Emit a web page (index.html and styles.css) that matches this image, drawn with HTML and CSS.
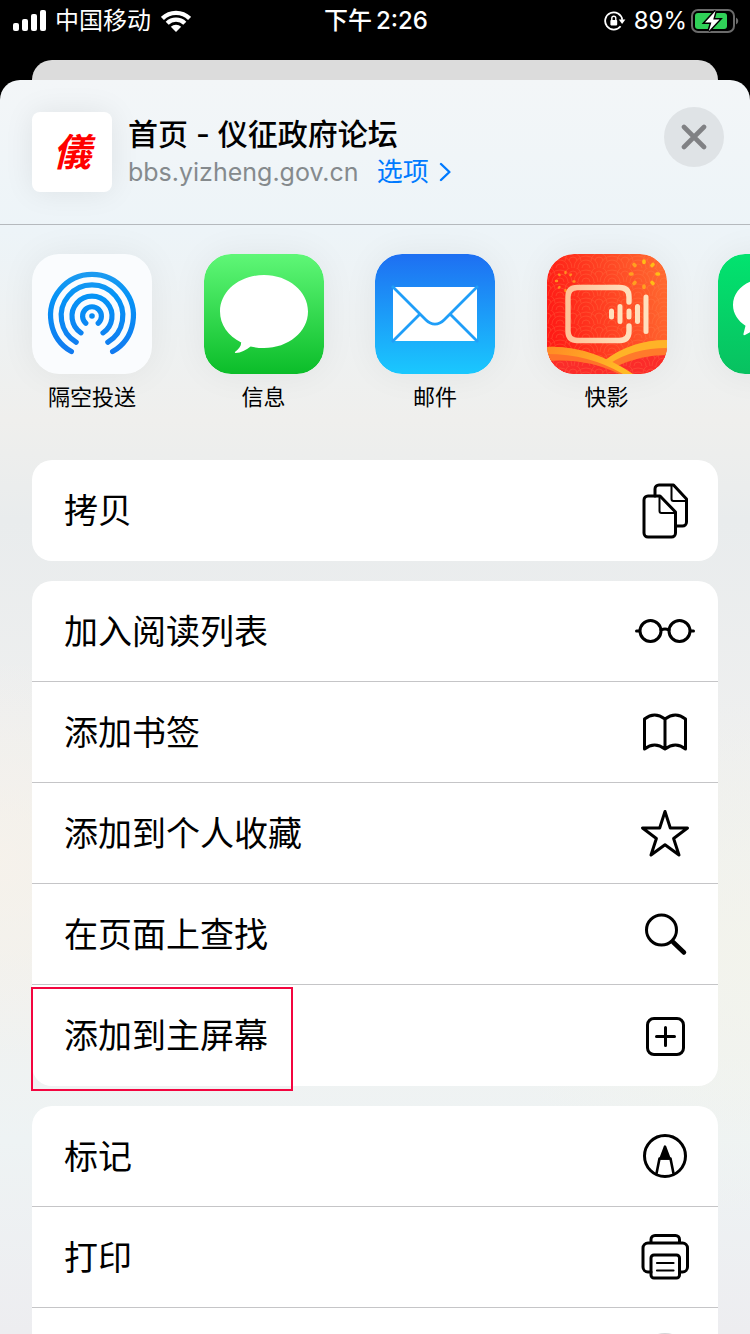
FILE: index.html
```html
<!DOCTYPE html>
<html lang="zh-CN">
<head>
  <meta charset="UTF-8" />
  <meta name="viewport" content="width=device-width, initial-scale=1" />
  <title>首页 - 仪征政府论坛</title>
  <link rel="stylesheet" href="styles.css">
</head>
<body>
  <div class="status-bar">
    <div class="status-left">
      <svg width="34" height="22" viewBox="0 0 34 22" fill="#fff">
        <rect x="0" y="13" width="6" height="8" rx="2"/>
        <rect x="9" y="9" width="6" height="12" rx="2"/>
        <rect x="18" y="4" width="6" height="17" rx="2"/>
        <rect x="27" y="0" width="6" height="21" rx="2"/>
      </svg>
      <span>中国移动</span>
      <svg class="wifi" width="30" height="22" viewBox="0 0 30 22" fill="none" stroke="#fff" stroke-width="4.4">
        <path d="M1.4 8.4a19.4 19.4 0 0 1 27.2 0"/>
        <path d="M6.2 13.2a12.6 12.6 0 0 1 17.6 0"/>
        <path d="M15 22l-5.2-5.2a7.4 7.4 0 0 1 10.4 0z" fill="#fff" stroke="none"/>
      </svg>
    </div>
    <div class="status-time"><span>下午</span><span>2:26</span></div>
    <div class="status-right">
      <svg width="22" height="20" viewBox="0 0 22 20" fill="none" stroke="#fff" stroke-width="1.8">
        <path d="M16.6 15.2a8.6 8.6 0 1 1 1.7-6.4"/>
        <path d="M14.8 8.4h6.6l-3.3 4.6z" fill="#fff" stroke="none"/>
        <rect x="6.4" y="9" width="6.8" height="5.4" rx="0.8" fill="#fff" stroke="none"/>
        <path d="M7.8 9.4V7.2a2 2 0 0 1 4 0v2.2" stroke-width="1.4"/>
      </svg>
      <span>89%</span>
      <svg class="battery" width="48" height="24" viewBox="0 0 48 24">
        <rect x="1" y="1" width="42" height="22" rx="6" fill="none" stroke="#6b6b6b" stroke-width="2"/>
        <path d="M45 8.4a4 4 0 0 1 0 7.2z" fill="#6b6b6b"/>
        <rect x="4" y="4" width="32" height="16" rx="3" fill="#30d158"/>
        <path d="M24.5 2L14 13.400h6.400L17.800 22 28.500 10.400h-6.300z" fill="#fff" stroke="#000" stroke-width="3" paint-order="stroke"/>
      </svg>
    </div>
  </div>

  <div class="back-card"></div>

  <main class="sheet">
    <header class="sheet-header">
      <div class="site-logo">儀</div>
      <div class="site-info">
        <h1>首页 - 仪征政府论坛</h1>
        <div class="site-sub">
          <span class="site-url">bbs.yizheng.gov.cn</span>
          <a href="#">选项
            <svg width="12" height="20" viewBox="0 0 12 20" fill="none" stroke="#007aff" stroke-width="2.4" stroke-linecap="round" stroke-linejoin="round"><path d="M2 2l8.4 8L2 18"/></svg>
          </a>
        </div>
      </div>
      <button class="close" type="button" aria-label="关闭">
        <svg width="26" height="26" viewBox="0 0 26 26" stroke="#808184" stroke-width="4.6" stroke-linecap="round"><path d="M3 3l20 20M23 3L3 23"/></svg>
      </button>
    </header>

    <nav class="apps">
      <button class="app" type="button">
        <svg class="app-icon" viewBox="0 0 120 120">
          <defs>
            <linearGradient id="air" gradientUnits="userSpaceOnUse" x1="0" y1="18" x2="0" y2="100">
              <stop offset="0" stop-color="#1e9bf0"/><stop offset="0.3" stop-color="#0593f6"/><stop offset="1" stop-color="#127af0"/>
            </linearGradient>
          </defs>
          <rect width="120" height="120" rx="27" fill="#fafcfe"/>
          <g fill="none" stroke="url(#air)" stroke-width="5.2" stroke-linecap="round">
            <path d="M39.4 97.6a41.4 41.4 0 1 1 41.2 0"/>
            <path d="M44.2 88.2a30.8 30.8 0 1 1 31.6 0"/>
            <path d="M49 78.8a20 20 0 1 1 22 0"/>
            <path d="M53.8 69.2a9.4 9.4 0 1 1 12.4 0"/>
          </g>
          <circle cx="60" cy="62" r="2.8" fill="#078bf3"/>
        </svg>
        <span>隔空投送</span>
      </button>
      <button class="app" type="button">
        <svg class="app-icon" viewBox="0 0 120 120">
          <defs>
            <linearGradient id="msg" x1="0" y1="0" x2="0" y2="1">
              <stop offset="0" stop-color="#5ff777"/><stop offset="1" stop-color="#0bbd29"/>
            </linearGradient>
          </defs>
          <rect width="120" height="120" rx="27" fill="url(#msg)"/>
          <path d="M60 21c24.4 0 44 16.2 44 36.5S84.4 94 60 94c-4.800 0-9.200-.5-13.400-1.600-4.600 3.600-9.600 6.200-15 6.600-.8 0-1-.8-.4-1.300 3.400-2.600 6-5.600 6-9.300C24 82 16 70.600 16 57.500 16 37.200 35.600 21 60 21z" fill="#fff"/>
        </svg>
        <span>信息</span>
      </button>
      <button class="app" type="button">
        <svg class="app-icon" viewBox="0 0 120 120">
          <defs>
            <linearGradient id="mail" x1="0" y1="0" x2="0" y2="1">
              <stop offset="0" stop-color="#1e6ff2"/><stop offset="1" stop-color="#1ac8fe"/>
            </linearGradient>
          </defs>
          <rect width="120" height="120" rx="27" fill="url(#mail)"/>
          <rect x="18" y="33" width="84" height="54" rx="2" fill="#fff"/>
          <g fill="none" stroke="#1f9ef8" stroke-width="2.8">
            <path d="M17 32l34 34c5.400 5.400 12.600 5.400 18 0l34-34"/>
            <path d="M17 88l27.500-27.500M103 88L75.500 60.500"/>
          </g>
        </svg>
        <span>邮件</span>
      </button>
      <button class="app" type="button">
        <svg class="app-icon" viewBox="0 0 120 120">
          <defs>
            <linearGradient id="kyBg" x1="0" y1="0.4" x2="1" y2="0.2">
              <stop offset="0" stop-color="#ff1c16"/><stop offset="1" stop-color="#ff6a30"/>
            </linearGradient>
            <linearGradient id="kyFrame" gradientUnits="userSpaceOnUse" x1="18" y1="0" x2="102" y2="0">
              <stop offset="0" stop-color="#ffc096"/><stop offset="1" stop-color="#ffe8c8"/>
            </linearGradient>
            <linearGradient id="kyWave" x1="0" y1="0" x2="1" y2="0.3">
              <stop offset="0" stop-color="#ff8a24"/><stop offset="1" stop-color="#ffba26"/>
            </linearGradient>
            <pattern id="scales" width="26" height="14" patternUnits="userSpaceOnUse">
              <g fill="none" stroke="#ff8a55" stroke-width="1" opacity="0.25">
                <path d="M1 14a12 12 0 0 1 24 0M5 14a8 8 0 0 1 16 0M9 14a4 4 0 0 1 8 0"/>
                <path d="M-8 7a8 8 0 0 1 16 0M-4 7a4 4 0 0 1 8 0M18 7a8 8 0 0 1 16 0M22 7a4 4 0 0 1 8 0"/>
              </g>
            </pattern>
            <clipPath id="kyClip"><rect width="120" height="120" rx="27"/></clipPath>
          </defs>
          <g clip-path="url(#kyClip)">
            <rect width="120" height="120" fill="url(#kyBg)"/>
            <path d="M0 105q30-4 60 10l60-20v25H0z" fill="#fb2c2a"/>
            <rect width="120" height="120" fill="url(#scales)"/>
            <path d="M57 107Q84 86 120 86v15Q92 101 68 113z" fill="#ff7a2b"/>
            <path d="M57 107Q84 86 120 86v8Q86 94 62 110z" fill="#ffb327"/>
            <path d="M0 93Q38 91 86 120H72Q40 104 0 107z" fill="#ff7229"/>
            <path d="M0 93Q42 91 86 120H76Q42 100 0 100z" fill="url(#kyWave)"/>
          </g>
          <g fill="none" stroke-linecap="round">
            <g stroke="#ffbd16" stroke-width="3.6">
              <path d="M97 7v1.500M106 10.500l-1 1M110 20h1.500M105 28.500l1 1" />
              <path d="M97 32v1.500M88 28.500l-1 1M83.500 20H85M87 10.500l1 1" stroke="#ff9f20"/>
            </g>
            <path d="M18.500 18v1M24 20.500l-.6.600M26.500 27.500h1M24 33.500l.6.600M18.500 36v1M12.500 33l-.6.600M9 27h1M12 20.500l.6.600" stroke="#ff8e20" stroke-width="2.4"/>
            <path d="M82 48V43q0-9.500-9.500-9.500h-42q-9.500 0-9.500 9.500v34q0 9.500 9.500 9.500h42q9.500 0 9.500-9.500v-5" stroke="url(#kyFrame)" stroke-width="5.4"/>
            <path d="M64.500 57v6M73 52.500v15M82 57v6M90.500 52.500v15M99 43V77.500" stroke="#ffe0bd" stroke-width="5"/>
          </g>
        </svg>
        <span>快影</span>
      </button>
      <button class="app" type="button" aria-label="更多应用">
        <svg class="app-icon" viewBox="0 0 120 120">
          <defs>
            <linearGradient id="wx" x1="0" y1="0" x2="0" y2="1">
              <stop offset="0" stop-color="#02e36f"/><stop offset="1" stop-color="#08c160"/>
            </linearGradient>
          </defs>
          <rect width="120" height="120" rx="27" fill="url(#wx)"/>
          <path d="M46 25c17 0 31 11.500 31 26S63 77 46 77c-3.400 0-6.600-.4-9.600-1.200L27 81c-1 .5-1.800-.2-1.500-1.300l2-8C20 67 15 59.500 15 51c0-14.500 14-26 31-26z" fill="#fff"/>
        </svg>
      </button>
    </nav>

    <section class="actions">
      <ul class="group">
        <li>
          <button class="action" type="button">
            <span>拷贝</span>
            <svg class="icon" viewBox="0 0 60 60">
              <path d="M20 15V8a4 4 0 0 1 4-4h14.500L51.500 18v23a4 4 0 0 1-4 4H42"/>
              <path d="M36.500 5v13a2 2 0 0 0 2 2h12" stroke-width="2"/>
              <path d="M13 15h12l15.500 16v21a4 4 0 0 1-4 4H13a4 4 0 0 1-4-4V19a4 4 0 0 1 4-4z"/>
              <path d="M24.500 16v14a2 2 0 0 0 2 2h13" stroke-width="2"/>
            </svg>
          </button>
        </li>
      </ul>

      <ul class="group">
        <li>
          <button class="action" type="button">
            <span>加入阅读列表</span>
            <svg class="icon" viewBox="0 0 60 60">
              <circle cx="15.500" cy="30" r="10.500"/><circle cx="44.500" cy="30" r="10.500"/>
              <path d="M1.500 30h3M55.500 30h3M26 29q4-2 8 0"/>
            </svg>
          </button>
        </li>
        <li>
          <button class="action" type="button">
            <span>添加书签</span>
            <svg class="icon" viewBox="0 0 60 60">
              <path d="M9.500 47V17q10-8 20.500 0 10.500-8 20.500 0v30q-10-8-20.500 0-10.500-8-20.500 0zM30 17v30"/>
            </svg>
          </button>
        </li>
        <li>
          <button class="action" type="button">
            <span>添加到个人收藏</span>
            <svg class="icon" viewBox="0 0 60 60">
              <path d="M30 8.500l5.300 16.500H52.500L38.600 35.500 44 52 30 41.800 16 52 21.400 35.500 7.500 25h17.200z"/>
            </svg>
          </button>
        </li>
        <li>
          <button class="action" type="button">
            <span>在页面上查找</span>
            <svg class="icon" viewBox="0 0 60 60">
              <circle cx="26.500" cy="26" r="15"/>
              <path d="M38 38l11 10.500" stroke-width="4.5"/>
            </svg>
          </button>
        </li>
        <li class="marked">
          <button class="action" type="button">
            <span>添加到主屏幕</span>
            <svg class="icon" viewBox="0 0 60 60">
              <rect x="12.500" y="12.500" width="36" height="36" rx="6.500"/>
              <path d="M30.500 21.500v18M21.500 30.500h18"/>
            </svg>
          </button>
        </li>
      </ul>

      <ul class="group">
        <li>
          <button class="action" type="button">
            <span>标记</span>
            <svg class="icon" viewBox="0 0 60 60">
              <circle cx="30" cy="30" r="20.500"/>
              <path d="M21.500 47.500l3-15h11l3 15" stroke-width="2.6"/>
              <path d="M30 20.500l4.500 12h-9z" fill="#000" stroke-width="2.4"/>
            </svg>
          </button>
        </li>
        <li>
          <button class="action" type="button">
            <span>打印</span>
            <svg class="icon" viewBox="0 0 60 60">
              <path d="M16 15v-2.500a4 4 0 0 1 4-4h20.500a4 4 0 0 1 4 4V15"/>
              <path d="M16 45h-3a5 5 0 0 1-5-5V21a5 5 0 0 1 5-5h34.500a5 5 0 0 1 5 5v19a5 5 0 0 1-5 5h-3"/>
              <rect x="16" y="28" width="28.500" height="23" rx="3"/>
              <path d="M22 36h16.500M22 43.500h16.500" stroke-width="2.2"/>
            </svg>
          </button>
        </li>
        <li>
          <button class="action" type="button" aria-label="更多操作">
            <svg class="icon" viewBox="0 0 60 60"><circle cx="30" cy="30" r="26" fill="#d5d5d7" stroke="none"/></svg>
          </button>
        </li>
      </ul>
    </section>
  </main>
</body>
</html>
```

FILE: styles.css
```css
*,
*::after {
  box-sizing: border-box;
}
body {
  margin: 0;
  height: 100vh;
  overflow: hidden;
  display: flex;
  flex-direction: column;
  background: #000;
  color: #000;
  font-family: Inter, "Noto Sans CJK SC", sans-serif;
}
button {
  padding: 0;
  border: none;
  background: none;
  color: inherit;
  font-family: inherit;
  cursor: pointer;
}
svg {
  display: block;
  flex-shrink: 0;
}

/* 状态栏 */
.status-bar {
  display: grid;
  grid-template-columns: 1fr auto 1fr;
  align-items: center;
  flex-shrink: 0;
  height: 40px;
  padding: 1px 11px 0 13px;
  color: #fff;
  font-size: 24px;
  line-height: 40px;
}
.status-left,
.status-right {
  display: flex;
  align-items: center;
  gap: 8px;
}
.status-right {
  justify-content: flex-end;
}
.status-time {
  display: flex;
  gap: 4px;
  font-weight: 500;
}
.wifi {
  margin-left: 2px;
}
.battery {
  margin-left: -4px;
}

/* 后面露出的一层卡片 */
.back-card {
  flex-shrink: 0;
  height: 40px;
  margin: 20px 32px -20px;
  border-radius: 20px 20px 0 0;
  background: #dcdcdc;
}

.sheet {
  flex: 1;
  min-height: 0;
  overflow: hidden;
  border-radius: 20px 20px 0 0;
  background:
    radial-gradient(circle at 0 62%, rgba(247, 242, 234, 0.8), transparent 200px),
    radial-gradient(circle at 100% 70%, rgba(243, 244, 236, 0.8), transparent 260px),
    linear-gradient(180deg, #f3f6f8 0, #edf4f8 150px, #efefed 340px, #e9eced 440px, #eeefef 640px, #f1f1ee 860px, #eef3f4 1060px, #ededf0 1254px);
}
.sheet-header {
  display: flex;
  align-items: flex-start;
  height: 145px;
  padding: 27px 26px 0 32px;
  border-bottom: 1px solid #b5b9bd;
}
.site-logo {
  width: 80px;
  height: 80px;
  margin-top: 5px;
  border-radius: 8px;
  background: #fff;
  box-shadow: 0 0 30px rgba(0, 0, 0, 0.08);
  color: #f00;
  font-size: 38px;
  font-weight: 700;
  font-style: italic;
  line-height: 80px;
  text-align: center;
}
.site-info {
  flex: 1;
  margin: 7px 0 0 16px;
}
.site-info h1 {
  margin: 0;
  font-size: 30px;
  font-weight: 500;
  line-height: 40px;
}
.site-sub {
  display: flex;
  gap: 18px;
  color: #858a8d;
  font-size: 26px;
  line-height: 36px;
}
.site-url {
  font-size: 25px;
}
.site-sub a {
  display: flex;
  align-items: center;
  gap: 10px;
  color: #007aff;
  text-decoration: none;
}
.close {
  display: flex;
  align-items: center;
  justify-content: center;
  width: 60px;
  height: 60px;
  border-radius: 50%;
  background: #dfe3e6;
}

/* 应用图标，每屏四个，第五个露出一角 */
.apps {
  display: flex;
  height: 235px;
  padding: 29px 32px 0;
}
.app {
  display: flex;
  flex: 0 0 25%;
  flex-direction: column;
  align-items: flex-start;
  font-size: 22px;
  line-height: 32px;
}
.app span {
  width: 120px;
  text-align: center;
}
.app-icon {
  width: 120px;
  height: 120px;
  margin-bottom: 7px;
  border-radius: 27px;
  box-shadow: 0 0 36px rgba(0, 0, 0, 0.06);
}

/* 操作列表 */
.actions {
  padding: 0 32px;
}
.group {
  margin: 0 0 20px;
  padding: 0;
  list-style: none;
  border-radius: 20px;
  background: #fff;
}
.group li {
  position: relative;
  height: 101px;
  border-bottom: 1px solid #c5c5c7;
}
.group li:last-child {
  border-bottom: none;
}
.action {
  display: flex;
  align-items: center;
  justify-content: space-between;
  width: 100%;
  height: 100%;
  padding: 0 23px 0 32px;
  font-size: 34px;
  text-align: left;
}
.action span {
  padding-bottom: 4px;
}
.icon {
  width: 60px;
  height: 60px;
  margin-left: auto;
  overflow: visible;
  fill: none;
  stroke: #000;
  stroke-width: 3;
  stroke-linecap: round;
  stroke-linejoin: round;
}

/* 红框标出“添加到主屏幕” */
.marked::after {
  content: "";
  position: absolute;
  top: 2px;
  left: -1px;
  width: 262px;
  height: 104px;
  border: 2px solid #f3053f;
}
```
